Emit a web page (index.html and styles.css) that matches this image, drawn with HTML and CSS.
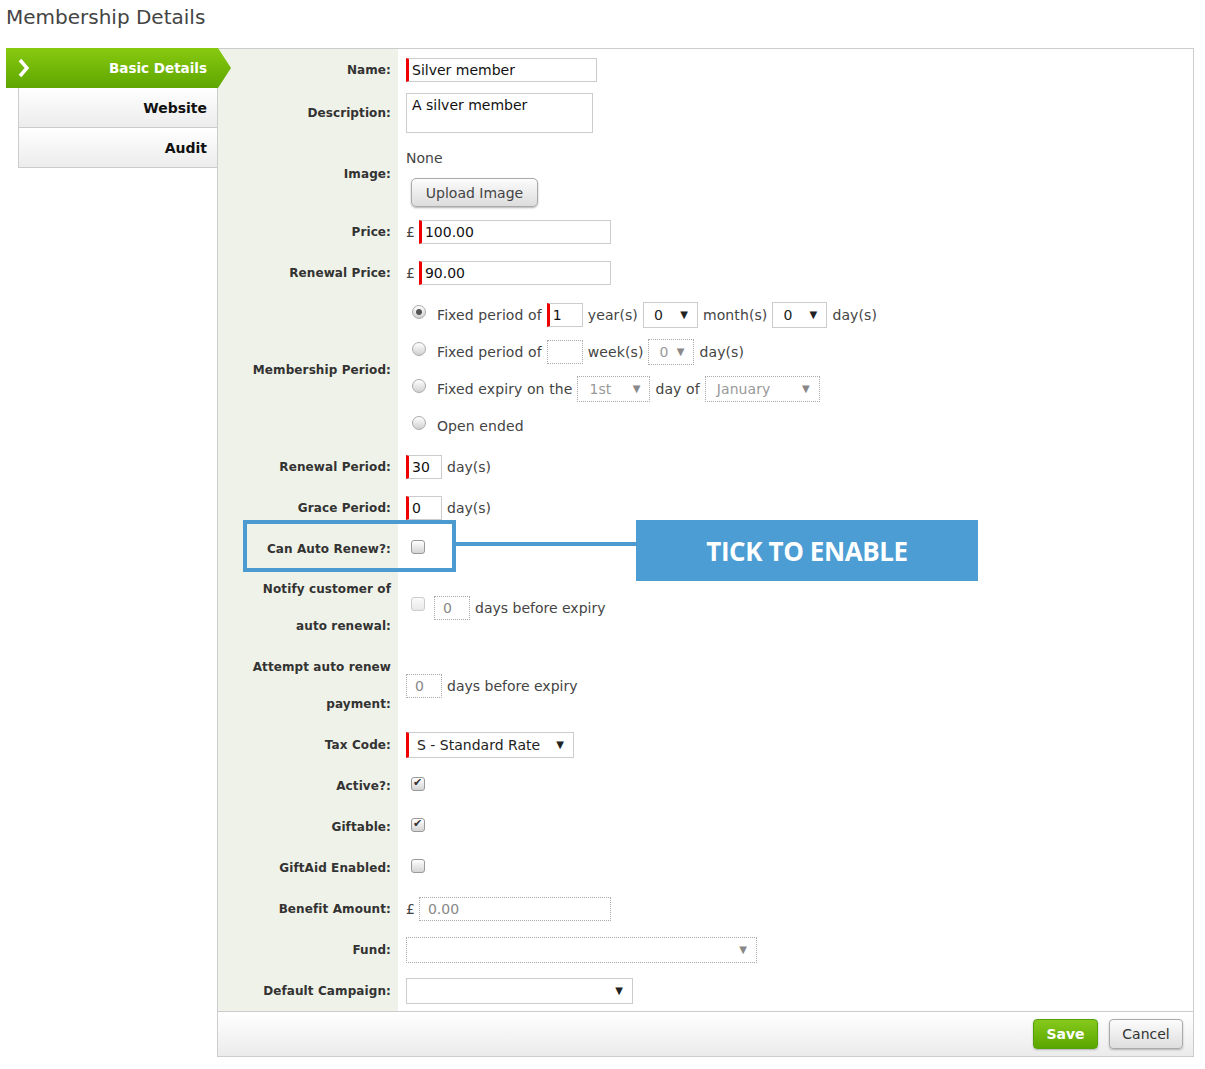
FILE: index.html
```html
<!DOCTYPE html>
<html lang="en">
<head>
    <meta charset="UTF-8">
    <title>Membership Details</title>
    <link rel="stylesheet" href="styles.css">
</head>
<body>
<div class="page">
    <h1>Membership Details</h1>

    <div class="layout">
        <div class="tabs">
            <div class="tab active">
                <svg class="chev" width="11" height="20" viewBox="0 0 11 20"><polyline points="2,2 9,10 2,18" fill="none" stroke="#fff" stroke-width="3.5"/></svg>
                Basic Details
            </div>
            <div class="tab plain">Website</div>
            <div class="tab plain">Audit</div>
        </div>

        <div class="panel">
            <div class="row">
                <div class="label">Name:</div>
                <div class="field"><input class="txt req w-name" type="text" value="Silver member"></div>
            </div>
            <div class="row h46">
                <div class="label">Description:</div>
                <div class="field"><textarea class="area">A silver member</textarea></div>
            </div>
            <div class="row h75">
                <div class="label">Image:</div>
                <div class="field col">
                    <div class="none">None</div>
                    <button class="btn-upload">Upload Image</button>
                </div>
            </div>
            <div class="row">
                <div class="label">Price:</div>
                <div class="field"><span class="cur">£</span><input class="txt req w-price" type="text" value="100.00"></div>
            </div>
            <div class="row">
                <div class="label">Renewal Price:</div>
                <div class="field"><span class="cur">£</span><input class="txt req w-price" type="text" value="90.00"></div>
            </div>
            <div class="row h153">
                <div class="label">Membership Period:</div>
                <div class="field col period">
                    <div class="opt">
                        <input class="rb" type="radio" name="period" checked>
                        <span>Fixed period of</span>
                        <input class="txt req w-small" type="text" value="1">
                        <span>year(s)</span>
                        <span class="sel w55"><span>0</span><span class="arr">▼</span></span>
                        <span>month(s)</span>
                        <span class="sel w55"><span>0</span><span class="arr">▼</span></span>
                        <span>day(s)</span>
                    </div>
                    <div class="opt">
                        <input class="rb" type="radio" name="period">
                        <span>Fixed period of</span>
                        <input class="txt dis w-small" type="text" value="">
                        <span>week(s)</span>
                        <span class="sel dis w46"><span>0</span><span class="arr">▼</span></span>
                        <span>day(s)</span>
                    </div>
                    <div class="opt">
                        <input class="rb" type="radio" name="period">
                        <span>Fixed expiry on the</span>
                        <span class="sel dis w73"><span>1st</span><span class="arr">▼</span></span>
                        <span>day of</span>
                        <span class="sel dis w115"><span>January</span><span class="arr">▼</span></span>
                    </div>
                    <div class="opt">
                        <input class="rb" type="radio" name="period">
                        <span>Open ended</span>
                    </div>
                </div>
            </div>
            <div class="row">
                <div class="label">Renewal Period:</div>
                <div class="field"><input class="txt req w-small" type="text" value="30"><span>day(s)</span></div>
            </div>
            <div class="row">
                <div class="label">Grace Period:</div>
                <div class="field"><input class="txt req w-small" type="text" value="0"><span>day(s)</span></div>
            </div>
            <div class="row">
                <div class="label">Can Auto Renew?:</div>
                <div class="field"><input class="cb" type="checkbox"></div>
            </div>
            <div class="row h78">
                <div class="label two">Notify customer of<br>auto renewal:</div>
                <div class="field">
                    <input class="cb off" type="checkbox" disabled>
                    <input class="txt dis w-small2" type="text" value="0">
                    <span>days before expiry</span>
                </div>
            </div>
            <div class="row h77">
                <div class="label two">Attempt auto renew<br>payment:</div>
                <div class="field">
                    <input class="txt dis w-small" type="text" value="0">
                    <span>days before expiry</span>
                </div>
            </div>
            <div class="row">
                <div class="label">Tax Code:</div>
                <div class="field"><span class="sel req w168"><span>S - Standard Rate</span><span class="arr">▼</span></span></div>
            </div>
            <div class="row">
                <div class="label">Active?:</div>
                <div class="field"><input class="cb" type="checkbox" checked></div>
            </div>
            <div class="row">
                <div class="label">Giftable:</div>
                <div class="field"><input class="cb" type="checkbox" checked></div>
            </div>
            <div class="row">
                <div class="label">GiftAid Enabled:</div>
                <div class="field"><input class="cb" type="checkbox"></div>
            </div>
            <div class="row">
                <div class="label">Benefit Amount:</div>
                <div class="field"><span class="cur">£</span><input class="txt dis w-price" type="text" value="0.00"></div>
            </div>
            <div class="row">
                <div class="label">Fund:</div>
                <div class="field"><span class="sel dis w351"><span></span><span class="arr">▼</span></span></div>
            </div>
            <div class="row">
                <div class="label">Default Campaign:</div>
                <div class="field"><span class="sel w227"><span></span><span class="arr">▼</span></span></div>
            </div>

            <div class="footer">
                <button class="btn-save">Save</button>
                <button class="btn-cancel">Cancel</button>
            </div>
        </div>
    </div>

    <!-- annotation -->
    <div class="hl-box"></div>
    <div class="hl-line"></div>
    <div class="hl-note">TICK TO ENABLE</div>
</div>
</body>
</html>
```

FILE: styles.css
```css
body {
    margin: 0;
    font-family: "DejaVu Sans", Verdana, sans-serif;
    font-size: 14px;
    color: #444;
    background-color: #fff;
}
.page {
    position: relative;
    padding-left: 6px;
}
h1 {
    margin: 0;
    height: 48px;
    box-sizing: border-box;
    padding-top: 5px;
    font-size: 20px;
    line-height: 24px;
    font-weight: normal;
    color: #444;
}
.layout {
    display: flex;
    width: 1188px;
}
.tabs {
    width: 211px;
    flex: none;
}
.tab {
    display: flex;
    align-items: center;
    justify-content: flex-end;
    height: 40px;
    box-sizing: border-box;
    font-weight: bold;
    font-size: 14px;
}
.tab.active {
    position: relative;
    z-index: 1;
    width: 225px;
    padding: 0 24px 0 12px;
    justify-content: space-between;
    font-size: 13.5px;
    color: #fff;
    background: linear-gradient(#88ca10, #5ea600);
    clip-path: polygon(0 0, 212px 0, 225px 50%, 212px 100%, 0 100%);
}
.tab.plain {
    margin-left: 12px;
    width: 199px;
    padding-right: 10px;
    color: #111;
    border-left: 1px solid #ccc;
    border-bottom: 1px solid #ccc;
    background: linear-gradient(#fff, #ececec);
}
.panel {
    flex: 1;
    border: 1px solid #ccc;
    background-color: #fff;
}
.row {
    display: flex;
    height: 41px;
}
.h46 { height: 46px; }
.h75 { height: 75px; }
.h153 { height: 153px; }
.h78 { height: 78px; }
.h77 { height: 77px; }
.label {
    width: 180px;
    flex: none;
    box-sizing: border-box;
    padding-right: 7px;
    display: flex;
    align-items: center;
    justify-content: flex-end;
    text-align: right;
    background-color: #eff2e8;
    font-weight: bold;
    font-size: 12px;
    letter-spacing: 0.1px;
    color: #333;
}
.label.two {
    line-height: 37px;
}
.field {
    flex: 1;
    display: flex;
    align-items: center;
    gap: 5px;
    padding-left: 8px;
}
.field.col {
    flex-direction: column;
    align-items: flex-start;
    gap: 0;
}
.none {
    margin-top: 13px;
    line-height: 18px;
}
.btn-upload {
    margin: 11px 0 0 5px;
    width: 127px;
    height: 29px;
    font-family: inherit;
    font-size: 14px;
    color: #444;
    border: 1px solid #aaa;
    border-radius: 5px;
    background: linear-gradient(#fcfcfc, #dcdcdc);
    box-shadow: 0 1px 2px rgba(0, 0, 0, 0.3);
}
.cur {
    margin-right: -1px;
}
.txt {
    height: 24px;
    box-sizing: border-box;
    border: 1px solid #ccc;
    padding: 0 4px;
    font-family: inherit;
    font-size: 14px;
    color: #111;
    background: #fff;
}
.txt.req {
    border-left: 3px solid #e00;
    padding-left: 3px;
}
.txt.dis {
    border: 1px dotted #aaa;
    color: #888;
    padding-left: 8px;
}
.w-name { width: 191px; }
.w-price { width: 192px; }
.w-small { width: 36px; }
.w-small2 { width: 36px; margin-left: 4px; }
.area {
    width: 187px;
    height: 40px;
    box-sizing: border-box;
    border: 1px solid #ccc;
    padding: 3px 5px;
    font-family: inherit;
    font-size: 14px;
    color: #111;
    resize: none;
}
.period {
    padding-top: 3px;
}
.opt {
    display: flex;
    align-items: center;
    gap: 5px;
    height: 37px;
}
.opt > span {
    letter-spacing: 0.1px;
}
.rb {
    appearance: none;
    width: 14px;
    height: 14px;
    margin: 0 6px 6px 6px;
    border: 1px solid #aaa;
    border-radius: 50%;
    background: linear-gradient(#fff, #d0d0d0);
    box-sizing: border-box;
}
.rb:checked {
    background: radial-gradient(circle, #555 0 2.5px, transparent 3.5px), linear-gradient(#fff, #cfcfcf);
}
.cb {
    appearance: none;
    position: relative;
    width: 14px;
    height: 14px;
    margin: 0 0 4px 5px;
    box-sizing: border-box;
    border: 1px solid #999;
    border-radius: 3px;
    background: linear-gradient(#fff, #d4d4d4);
}
.cb:checked::after {
    content: "✔";
    position: absolute;
    left: 1px;
    top: -2px;
    font-size: 11px;
    color: #333;
}
.cb.off {
    border-color: #ccc;
    background: linear-gradient(#fafafa, #e8e8e8);
    margin-bottom: 8px;
}
.sel {
    display: inline-flex;
    align-items: center;
    justify-content: space-between;
    height: 26px;
    box-sizing: border-box;
    padding: 0 9px 0 10px;
    border: 1px solid #ccc;
    font-size: 14px;
    color: #222;
    background: #fff;
}
.sel .arr {
    font-size: 10px;
}
.sel.dis {
    border: 1px dotted #aaa;
    color: #999;
}
.sel.dis .arr {
    color: #888;
}
.sel.req {
    border-left: 3px solid #e00;
}
.w55 { width: 55px; }
.w46 { width: 46px; }
.w73 { width: 73px; padding-left: 11px; }
.w115 { width: 115px; padding-left: 11px; }
.w168 { width: 168px; padding-left: 8px; }
.w351 { width: 351px; }
.w227 { width: 227px; }
.footer {
    display: flex;
    align-items: center;
    justify-content: flex-end;
    gap: 11px;
    height: 45px;
    box-sizing: border-box;
    padding-right: 10px;
    border-top: 1px solid #ccc;
    background: linear-gradient(#fff, #ebebeb);
}
.btn-save {
    width: 65px;
    height: 30px;
    font-family: inherit;
    font-size: 14px;
    font-weight: bold;
    color: #fff;
    border: 1px solid #55a10a;
    border-radius: 4px;
    background: linear-gradient(#86c91c, #5aa600);
    box-shadow: 0 1px 2px rgba(0, 0, 0, 0.25);
}
.btn-cancel {
    width: 74px;
    height: 30px;
    font-family: inherit;
    font-size: 14px;
    color: #333;
    border: 1px solid #aaa;
    border-radius: 4px;
    background: linear-gradient(#fcfcfc, #dedede);
    box-shadow: 0 1px 2px rgba(0, 0, 0, 0.25);
}
.hl-box {
    position: absolute;
    left: 243px;
    top: 520px;
    width: 213px;
    height: 52px;
    box-sizing: border-box;
    border: 4px solid #4b9bd1;
}
.hl-line {
    position: absolute;
    left: 455px;
    top: 542px;
    width: 181px;
    height: 4px;
    background: #4b9bd1;
}
.hl-note {
    position: absolute;
    left: 636px;
    top: 520px;
    width: 342px;
    height: 61px;
    display: flex;
    align-items: center;
    justify-content: center;
    background: #4b9dd3;
    color: #fff;
    font-family: "Open Sans", sans-serif;
    font-weight: bold;
    font-size: 26px;
    letter-spacing: -0.4px;
}
```
